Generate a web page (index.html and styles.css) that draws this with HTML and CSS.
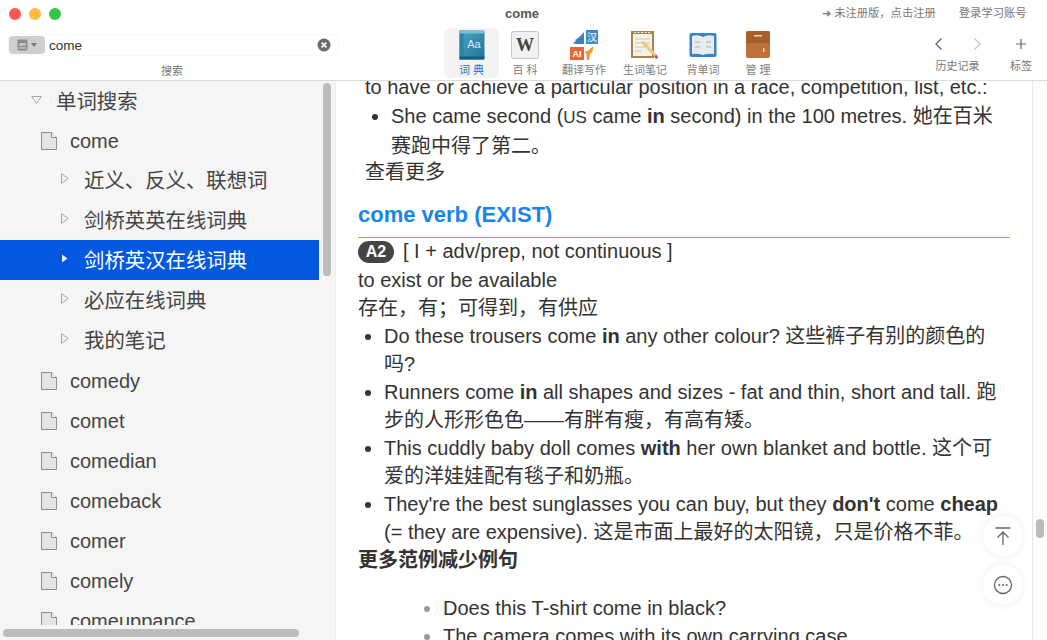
FILE: index.html
```html
<!DOCTYPE html>
<html lang="en">
<head>
    <meta charset="UTF-8">
    <title>come</title>
    <link rel="stylesheet" href="styles.css">
</head>
<body>
<div class="window">
    <!--顶部工具栏-->
    <header class="toolbar">
        <div class="search-area">
            <div class="lights">
                <span class="light red"></span>
                <span class="light yellow"></span>
                <span class="light green"></span>
            </div>
            <div class="search-box">
                <div class="lang-btn">
                    <svg width="11" height="12" viewBox="0 0 11 12"><rect x="0.5" y="0.5" width="10" height="11" rx="1" fill="#8a8a8a"/><text x="5.5" y="6.5" class="icon-en">en</text><rect x="1.5" y="8.5" width="8" height="1" fill="#ddd"/></svg>
                    <span class="caret"></span>
                </div>
                <span class="search-text">come</span>
                <svg class="clear" width="14" height="14" viewBox="0 0 14 14"><circle cx="7" cy="7" r="6.5" fill="#6b6b6b"/><path d="M4.6 4.6l4.8 4.8M9.4 4.6l-4.8 4.8" stroke="#fff" stroke-width="1.6"/></svg>
            </div>
            <div class="tool-label">搜索</div>
        </div>
        <div class="center-area">
            <div class="win-title">come</div>
            <div class="tools">
                <div class="tool active t-dict">
                    <svg width="26" height="30" viewBox="0 0 26 30"><defs><linearGradient id="bookFill" x1="0" y1="0" x2="1" y2="1"><stop offset="0" stop-color="#4fa6c4"/><stop offset="1" stop-color="#1f7396"/></linearGradient></defs><rect x="0.5" y="0.5" width="25" height="29" rx="2" fill="url(#bookFill)"/><rect x="0.5" y="0.5" width="4" height="29" fill="#2a84a6"/><rect x="0.5" y="0.5" width="25" height="3" fill="#7cbdd2"/><rect x="0.5" y="26.5" width="25" height="3" fill="#17607f"/><text x="15" y="18" class="icon-text">Aa</text></svg>
                    <span class="tool-name">词 典</span>
                </div>
                <div class="tool t-wiki">
                    <svg width="28" height="30" viewBox="0 0 28 30"><rect x="0.5" y="1.5" width="27" height="27" rx="2" fill="#f2f2f2" stroke="#c4c4c4"/><text x="14" y="21" class="icon-w">W</text></svg>
                    <span class="tool-name">百 科</span>
                </div>
                <div class="tool t-trans">
                    <svg width="30" height="30" viewBox="0 0 30 30"><rect x="17" y="0" width="12" height="14" fill="#3f8fc4"/><text x="23" y="11" class="icon-han">汉</text><rect x="1" y="17" width="14" height="13" fill="#e4683a"/><text x="8" y="27" class="icon-ai">AI</text><path d="M15 2v12H9q-4 0-5-1l3-2-1-1q4-2 9-8z" fill="#3f7fc0"/><path d="M24 16q1 5-3 8l-1 6h-2l-1-7-2-1q5-1 9-6z" fill="#ef9a2e"/></svg>
                    <span class="tool-name">翻译写作</span>
                </div>
                <div class="tool t-note">
                    <svg width="28" height="30" viewBox="0 0 28 30"><rect x="0" y="1" width="23" height="27" fill="#a5844e"/><rect x="2" y="4" width="19" height="22" fill="#f4f2e6"/><path d="M3 2.5h17" stroke="#eee" stroke-dasharray="2 1.5"/><path d="M4 9h15M4 13h15M4 17h10M4 21h7" stroke="#c9c7b8"/><path d="M10 12l3-1 13 14-2 2-13-13z" fill="#eec787"/><path d="M23 26l3-1 1 3-2 1z" fill="#c2495a"/></svg>
                    <span class="tool-name">生词笔记</span>
                </div>
                <div class="tool t-book">
                    <svg width="28" height="30" viewBox="0 0 28 30"><rect x="0.5" y="3" width="27" height="24" rx="2" fill="#3c83c8"/><path d="M3 6q6-2 11 1q5-3 11-1v18q-6-1-11 1q-5-2-11-1z" fill="#e6ecf1"/><path d="M6 12h5M6 17h5M17 12h5M17 17h5" stroke="#a9b3bc"/></svg>
                    <span class="tool-name">背单词</span>
                </div>
                <div class="tool t-manage">
                    <svg width="24" height="30" viewBox="0 0 24 30"><rect x="0" y="1" width="24" height="27" rx="2" fill="#bd7136"/><rect x="0" y="1" width="24" height="10" rx="2" fill="#a85f2b"/><path d="M0 12h24" stroke="#7f4a22"/><rect x="8" y="5" width="8" height="1.5" fill="#ecd5bd"/><rect x="17" y="18" width="1.5" height="4" fill="#ecd5bd"/></svg>
                    <span class="tool-name">管 理</span>
                </div>
            </div>
        </div>
        <div class="right-area">
            <div class="account">
                <span>➜ 未注册版，点击注册</span>
                <span>登录学习账号</span>
            </div>
            <div class="nav-row">
                <div class="nav-group">
                    <div class="nav-btns">
                        <svg class="nav-icon" width="10" height="14" viewBox="0 0 10 14"><path d="M7.5 1.5L2 7l5.5 5.5" fill="none" stroke="#666" stroke-width="1.3"/></svg>
                        <svg class="nav-icon" width="10" height="14" viewBox="0 0 10 14"><path d="M2.5 1.5L8 7l-5.5 5.5" fill="none" stroke="#c4c4c4" stroke-width="1.3"/></svg>
                    </div>
                    <div class="tool-label">历史记录</div>
                </div>
                <div class="nav-group tag-group">
                    <svg class="nav-icon" width="14" height="14" viewBox="0 0 14 14"><path d="M7 2v10M2 7h10" fill="none" stroke="#666" stroke-width="1.2"/></svg>
                    <div class="tool-label">标签</div>
                </div>
            </div>
        </div>
    </header>

    <div class="main">
        <!--左侧单词树-->
        <aside class="sidebar">
            <ul class="tree">
                <li class="row root"><svg class="tri" width="11" height="8" viewBox="0 0 11 8"><path d="M.7.5h9.6L5.5 7.4z" fill="#f2f2f2" stroke="#a8a8a8"/></svg>单词搜索</li>
                <li class="row word"><svg class="doc" viewBox="0 0 16 18"><path d="M.5.5h10l5 5v12H.5z" fill="#e4e4e4" stroke="#8f8f8f"/><path d="M10.5.5v5h5" fill="#f6f6f6" stroke="#8f8f8f"/></svg>come</li>
                <li class="row sub"><svg class="tri" width="8" height="11" viewBox="0 0 8 11"><path d="M.5.7v9.6l6.8-4.8z" fill="#f2f2f2" stroke="#a8a8a8"/></svg>近义、反义、联想词</li>
                <li class="row sub"><svg class="tri" width="8" height="11" viewBox="0 0 8 11"><path d="M.5.7v9.6l6.8-4.8z" fill="#f2f2f2" stroke="#a8a8a8"/></svg>剑桥英英在线词典</li>
                <li class="row sub selected"><svg class="tri" width="8" height="11" viewBox="0 0 8 11"><path d="M1 1.5v8l5.5-4z" fill="#e8eefb"/></svg>剑桥英汉在线词典</li>
                <li class="row sub"><svg class="tri" width="8" height="11" viewBox="0 0 8 11"><path d="M.5.7v9.6l6.8-4.8z" fill="#f2f2f2" stroke="#a8a8a8"/></svg>必应在线词典</li>
                <li class="row sub"><svg class="tri" width="8" height="11" viewBox="0 0 8 11"><path d="M.5.7v9.6l6.8-4.8z" fill="#f2f2f2" stroke="#a8a8a8"/></svg>我的笔记</li>
                <li class="row word"><svg class="doc" viewBox="0 0 16 18"><path d="M.5.5h10l5 5v12H.5z" fill="#e4e4e4" stroke="#8f8f8f"/><path d="M10.5.5v5h5" fill="#f6f6f6" stroke="#8f8f8f"/></svg>comedy</li>
                <li class="row word"><svg class="doc" viewBox="0 0 16 18"><path d="M.5.5h10l5 5v12H.5z" fill="#e4e4e4" stroke="#8f8f8f"/><path d="M10.5.5v5h5" fill="#f6f6f6" stroke="#8f8f8f"/></svg>comet</li>
                <li class="row word"><svg class="doc" viewBox="0 0 16 18"><path d="M.5.5h10l5 5v12H.5z" fill="#e4e4e4" stroke="#8f8f8f"/><path d="M10.5.5v5h5" fill="#f6f6f6" stroke="#8f8f8f"/></svg>comedian</li>
                <li class="row word"><svg class="doc" viewBox="0 0 16 18"><path d="M.5.5h10l5 5v12H.5z" fill="#e4e4e4" stroke="#8f8f8f"/><path d="M10.5.5v5h5" fill="#f6f6f6" stroke="#8f8f8f"/></svg>comeback</li>
                <li class="row word"><svg class="doc" viewBox="0 0 16 18"><path d="M.5.5h10l5 5v12H.5z" fill="#e4e4e4" stroke="#8f8f8f"/><path d="M10.5.5v5h5" fill="#f6f6f6" stroke="#8f8f8f"/></svg>comer</li>
                <li class="row word"><svg class="doc" viewBox="0 0 16 18"><path d="M.5.5h10l5 5v12H.5z" fill="#e4e4e4" stroke="#8f8f8f"/><path d="M10.5.5v5h5" fill="#f6f6f6" stroke="#8f8f8f"/></svg>comely</li>
                <li class="row word"><svg class="doc" viewBox="0 0 16 18"><path d="M.5.5h10l5 5v12H.5z" fill="#e4e4e4" stroke="#8f8f8f"/><path d="M10.5.5v5h5" fill="#f6f6f6" stroke="#8f8f8f"/></svg>comeuppance</li>
            </ul>
            <div class="side-fade"></div>
            <div class="thumb-v"></div>
            <div class="thumb-h"></div>
        </aside>

        <!--右侧词典内容-->
        <section class="content">
            <div class="article">
                <div class="indent">
                    <p>to have or achieve a particular position in a race, competition, list, etc.:</p>
                    <ul class="examples first-list">
                        <li>She came second (<span class="small">US</span> came <b>in</b> second) in the 100 metres. 她在百米赛跑中得了第二。</li>
                    </ul>
                    <p class="more">查看更多</p>
                </div>
                <h2>come verb (EXIST)</h2>
                <p class="gram"><span class="level">A2</span>[ I + adv/prep, not continuous ]</p>
                <p>to exist or be available</p>
                <p>存在，有；可得到，有供应</p>
                <ul class="examples">
                    <li>Do these trousers come <b>in</b> any other colour? 这些裤子有别的颜色的吗?</li>
                    <li>Runners come <b>in</b> all shapes and sizes - fat and thin, short and tall. 跑步的人形形色色——有胖有瘦，有高有矮。</li>
                    <li>This cuddly baby doll comes <b>with</b> her own blanket and bottle. 这个可爱的洋娃娃配有毯子和奶瓶。</li>
                    <li>They're the best sunglasses you can buy, but they <b>don't</b> come <b>cheap</b> (= they are expensive). 这是市面上最好的太阳镜，只是价格不菲。</li>
                </ul>
                <p class="more-bold">更多范例减少例句</p>
                <ul class="extra">
                    <li>Does this T-shirt come in black?</li>
                    <li>The camera comes with its own carrying case.</li>
                </ul>
            </div>
            <div class="float-btn top-btn">
                <svg width="18" height="20" viewBox="0 0 18 20"><path d="M1.5 2h15M9 19V6M3.5 11.5L9 6l5.5 5.5" fill="none" stroke="#666" stroke-width="1.3"/></svg>
            </div>
            <div class="float-btn more-btn">
                <svg width="20" height="20" viewBox="0 0 20 20"><circle cx="10" cy="10" r="8.5" fill="none" stroke="#666" stroke-width="1.3"/><circle cx="6.3" cy="10" r="1" fill="#666"/><circle cx="10" cy="10" r="1" fill="#666"/><circle cx="13.7" cy="10" r="1" fill="#666"/></svg>
            </div>
        </section>

        <div class="scroll-col"><div class="thumb-c"></div></div>
    </div>
</div>
</body>
</html>
```
FILE: styles.css
```css
*{
    margin: 0px;
    padding: 0px;
    box-sizing: border-box;
}
html, body
{
    height: 100%;
    overflow: hidden;
    background: #fff;
}
body
{
    font-family: "Liberation Sans", "Noto Sans CJK SC", sans-serif;
    color: #333;
}
ul
{
    list-style: none;
}
.window
{
    width: 1047px;
    height: 640px;
    display: flex;
    flex-direction: column;
}
.toolbar
{
    height: 81px;
    flex: none;
    display: flex;
    background: #fff;
    border-bottom: 1px solid #dcdcdc;
}
.search-area
{
    width: 344px;
    padding: 8px 0 0 9px;
}
.lights
{
    display: flex;
    gap: 8px;
    height: 12px;
}
.light
{
    width: 12px;
    height: 12px;
    border-radius: 50%;
}
.red { background: #fc5753; }
.yellow { background: #fdbc40; }
.green { background: #33c748; }
.search-box
{
    margin-top: 15px;
    width: 329px;
    height: 20px;
    display: flex;
    align-items: center;
    border-radius: 4px;
    box-shadow: 0 0 2px rgba(0,0,0,0.1);
}
.lang-btn
{
    width: 36px;
    height: 18px;
    background: #cfcfcf;
    border-radius: 4px;
    display: flex;
    align-items: center;
    padding-left: 8px;
    gap: 3px;
}
.caret
{
    width: 0;
    height: 0;
    border-left: 3px solid transparent;
    border-right: 3px solid transparent;
    border-top: 4px solid #777;
}
.search-text
{
    margin-left: 4px;
    font-size: 13.5px;
    flex: 1;
    color: #333;
}
.clear
{
    margin-right: 7px;
}
.tool-label
{
    font-size: 11px;
    color: #777;
    text-align: center;
    line-height: 14px;
}
.search-area .tool-label
{
    margin-top: 9px;
    width: 326px;
}
.center-area
{
    width: 444px;
    display: flex;
    flex-direction: column;
}
.win-title
{
    height: 28px;
    padding: 6px 0 0 161px;
    font-size: 13px;
    font-weight: bold;
    color: #555;
}
.tools
{
    display: flex;
    padding-left: 100px;
}
.tool
{
    height: 50px;
    flex: none;
    display: flex;
    flex-direction: column;
    align-items: center;
    padding-top: 2px;
    border-radius: 6px;
}
.t-dict { width: 55px; }
.t-wiki { width: 52px; }
.t-trans { width: 66px; }
.t-note { width: 56px; }
.t-book { width: 60px; }
.t-manage { width: 50px; }
.tool.active
{
    background: #f3f3f3;
}
.tool-name
{
    font-size: 11px;
    line-height: 14px;
    margin-top: 3px;
    color: #808080;
    white-space: nowrap;
}
.active .tool-name
{
    color: #2a6fd0;
}
.icon-en
{
    font-family: "Liberation Sans", sans-serif;
    font-size: 5.5px;
    font-weight: bold;
    fill: #eee;
    text-anchor: middle;
}
.icon-text
{
    font-family: "Liberation Sans", sans-serif;
    font-size: 11px;
    fill: #d8eef6;
    text-anchor: middle;
}
.icon-w
{
    font-family: "Liberation Serif", serif;
    font-size: 18px;
    font-weight: bold;
    fill: #444;
    text-anchor: middle;
}
.icon-han
{
    font-family: "Noto Sans CJK SC", sans-serif;
    font-size: 10px;
    fill: #fff;
    text-anchor: middle;
}
.icon-ai
{
    font-family: "Liberation Sans", sans-serif;
    font-size: 9px;
    font-weight: bold;
    fill: #fff;
    text-anchor: middle;
}
.right-area
{
    flex: 1;
    display: flex;
    flex-direction: column;
}
.account
{
    display: flex;
    gap: 23px;
    font-size: 11.3px;
    color: #777;
    padding: 4px 0 0 34px;
    height: 37px;
}
.nav-row
{
    display: flex;
    padding-left: 145px;
    gap: 28px;
}
.nav-btns
{
    display: flex;
    gap: 28px;
    height: 17px;
    padding-left: 1px;
}
.nav-icon
{
    display: block;
}
.nav-group .tool-label
{
    margin-top: 5px;
}
.tag-group
{
    display: flex;
    flex-direction: column;
    align-items: center;
}
.tag-group .tool-label
{
    margin-top: 8px;
}
.main
{
    flex: 1;
    display: flex;
    min-height: 0;
}
.sidebar
{
    width: 335px;
    flex: none;
    position: relative;
    background: #f5f5f5;
    overflow: hidden;
}
.tree
{
    width: 319px;
    margin-top: -1px;
}
.row
{
    height: 40px;
    display: flex;
    align-items: center;
    font-size: 20.4px;
    color: #444;
    white-space: nowrap;
}
.root
{
    padding: 0 0 0 31px;
}
.root .tri
{
    margin-right: 14px;
}
.word
{
    padding: 2px 0 0 41px;
    font-size: 20px;
}
.sub
{
    padding: 0 0 3px 61px;
}
.sub .tri
{
    margin-right: 15px;
}
.doc
{
    width: 16px;
    height: 18px;
    margin-right: 13px;
    flex: none;
}
.tri
{
    display: block;
    flex: none;
}
.selected
{
    background: #0258de;
    color: #fff;
}
.side-fade
{
    position: absolute;
    left: 0;
    right: 0;
    bottom: 0;
    height: 15px;
    background: #f5f5f5;
}
.thumb-v
{
    position: absolute;
    left: 323px;
    top: 2px;
    width: 8px;
    height: 193px;
    border-radius: 4px;
    background: #bcbcbc;
}
.thumb-h
{
    position: absolute;
    left: 3px;
    bottom: 3px;
    width: 296px;
    height: 8px;
    border-radius: 4px;
    background: #bcbcbc;
}
.content
{
    flex: 1;
    position: relative;
    overflow: hidden;
    background: #fff;
    border-left: 1px solid #ececec;
}
.article
{
    margin-top: -8px;
    padding: 0 22px 0 22px;
    font-size: 20px;
    line-height: 28px;
    color: #333;
}
.indent
{
    padding-left: 7px;
}
.small
{
    font-size: 17px;
}
.examples
{
    list-style: disc;
    padding-left: 26px;
}
.first-list
{
    margin-top: 1px;
}
.more
{
    margin-top: -2px;
}
h2
{
    font-size: 22px;
    line-height: 30px;
    margin-top: 14px;
    padding-bottom: 7px;
    color: #1a85e8;
    border-bottom: 1px solid #d39b3f;
}
.gram
{
    height: 29px;
    margin-top: -1px;
}
.level
{
    display: inline-block;
    width: 36px;
    height: 22px;
    line-height: 22px;
    margin-right: 9px;
    border-radius: 11px;
    background: #444;
    color: #fff;
    font-size: 16px;
    font-weight: bold;
    text-align: center;
    vertical-align: 1px;
}
.more-bold
{
    font-weight: bold;
}
.extra
{
    list-style: disc;
    padding-left: 85px;
    margin-top: 20px;
}
.extra li::marker
{
    color: #999;
}
.float-btn
{
    position: absolute;
    left: 647px;
    width: 40px;
    height: 40px;
    border-radius: 50%;
    background: #fff;
    box-shadow: 0 0 8px rgba(0,0,0,0.07);
    display: flex;
    align-items: center;
    justify-content: center;
}
.top-btn
{
    top: 435px;
}
.more-btn
{
    top: 484px;
}
.scroll-col
{
    width: 15px;
    flex: none;
    position: relative;
    background: #fcfcfc;
    border-left: 1px solid #e6e6e6;
}
.thumb-c
{
    position: absolute;
    left: 3px;
    top: 438px;
    width: 8px;
    height: 19px;
    border-radius: 4px;
    background: #bcbcbc;
}
```
